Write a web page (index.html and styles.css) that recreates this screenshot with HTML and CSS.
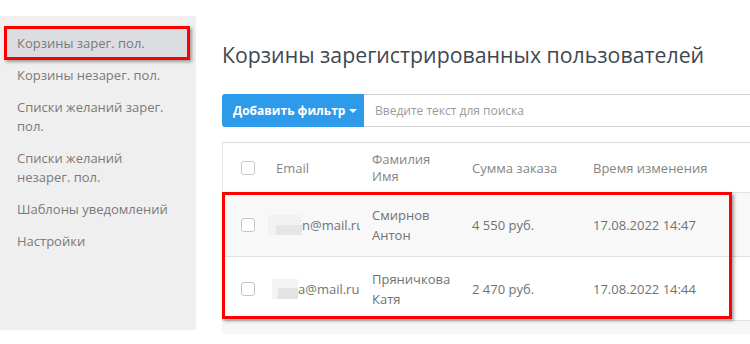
FILE: index.html
```html
<!DOCTYPE html>
<html lang="ru">
<head>
<meta charset="utf-8">
<link rel="stylesheet" href="styles.css">
</head>
<body>
<div class="page">
  <aside class="sidebar">
    <div class="nav-item active">Корзины зарег. пол.</div>
    <div class="nav-item">Корзины незарег. пол.</div>
    <div class="nav-item">Списки желаний зарег. пол.</div>
    <div class="nav-item">Списки желаний незарег. пол.</div>
    <div class="nav-item">Шаблоны уведомлений</div>
    <div class="nav-item">Настройки</div>
  </aside>
  <main class="main">
    <h1 class="title">Корзины зарегистрированных пользователей</h1>
    <div class="filter-bar">
      <button class="filter-btn">Добавить фильтр <span class="caret"></span></button>
      <div class="search">Введите текст для поиска</div>
    </div>
    <div class="panel">
      <div class="row head">
        <div class="cell c-check"><span class="checkbox"></span></div>
        <div class="cell c-email">Email</div>
        <div class="cell c-name">Фамилия Имя</div>
        <div class="cell c-sum">Сумма заказа</div>
        <div class="cell c-time">Время изменения</div>
      </div>
      <div class="body">
        <div class="row odd">
          <div class="cell c-check"><span class="checkbox"></span></div>
          <div class="cell c-email"><span class="blur b1"></span>n@mail.ru</div>
          <div class="cell c-name">Смирнов Антон</div>
          <div class="cell c-sum">4 550 руб.</div>
          <div class="cell c-time">17.08.2022 14:47</div>
        </div>
        <div class="row">
          <div class="cell c-check"><span class="checkbox"></span></div>
          <div class="cell c-email"><span class="blur b2"></span>a@mail.ru</div>
          <div class="cell c-name">Пряничкова Катя</div>
          <div class="cell c-sum">2 470 руб.</div>
          <div class="cell c-time">17.08.2022 14:44</div>
        </div>
        <div class="highlight"></div>
      </div>
      <div class="panel-foot"></div>
    </div>
  </main>
</div>
</body>
</html>
```
FILE: styles.css
```css
* { box-sizing: border-box; }
html, body { margin: 0; padding: 0; background: #fff; }
body { font-family: "Open Sans", "Liberation Sans", sans-serif; }
.page {
  display: flex;
  padding-top: 16px;
  width: 750px;
  height: 344px;
  overflow: hidden;
}
.sidebar {
  width: 196px;
  height: 314px;
  flex: none;
  background: #efefef;
  padding-top: 10px;
}
.nav-item {
  font-size: 13px;
  line-height: 19px;
  color: #7a7a7a;
  padding: 6px 20px 7px 17px;
}
.nav-item.active {
  margin-left: 4px;
  width: 186px;
  padding: 5px 10px 6px 10px;
  height: 34px;
  line-height: 18px;
  background: #dcdde0;
  border: 3px solid #f00;
  box-shadow: 2px 2px 3px rgba(0,0,0,0.35);
  margin-bottom: 0;
}
.main {
  flex: 1;
  padding-left: 26px;
  min-width: 0;
}
.title {
  margin: 24px 0 0 0;
  font-size: 21.3px;
  font-weight: 400;
  line-height: 29px;
  color: #3f474f;
  white-space: nowrap;
}
.filter-bar {
  display: flex;
  margin-top: 25px;
  height: 33px;
}
.filter-btn {
  flex: none;
  width: 142px;
  height: 33px;
  border: 0;
  border-radius: 3px 0 0 3px;
  background: #2e9bea;
  color: #fff;
  font-family: inherit;
  font-size: 12px;
  font-weight: 700;
  text-align: left;
  padding: 0 0 0 11px;
  display: flex;
  align-items: center;
  gap: 4px;
}
.caret {
  width: 0; height: 0;
  border-left: 4px solid transparent;
  border-right: 4px solid transparent;
  border-top: 4px solid #fff;
}
.search {
  flex: 1;
  border-top: 1px solid #cfcfcf;
  border-bottom: 1px solid #d4d4d4;
  font-size: 12px;
  color: #9a9a9a;
  padding-left: 11px;
  display: flex;
  align-items: center;
}
.panel {
  margin-top: 15px;
  border-top: 1px solid #dcdcdc;
  border-left: 1px solid #e2e2e2;
  width: 560px;
}
.row {
  display: grid;
  grid-template-columns: 41px 96px 100px 121px 1fr;
  border-bottom: 1px solid #e2e2e2;
  font-size: 13px;
  color: #727272;
  line-height: 20px;
}
.row.odd { background: #f8f8f8; }
.row.head { color: #858585; line-height: 17px; }
.cell {
  padding: 12px 0 11px 12px;
  display: flex;
  align-items: center;
  white-space: nowrap;
  overflow: hidden;
}
.head .cell { padding-top: 8px; padding-bottom: 7px; }
.c-check { padding-left: 18px; }
.c-name { white-space: normal; padding-right: 13px; }
.checkbox {
  width: 14px;
  height: 14px;
  border: 1px solid #c6c6c6;
  border-radius: 3px;
  background: #fff;
  flex: none;
}
.blur {
  flex: none;
  height: 20px;
  width: 34px;
  margin-left: -8px;
  background:
    linear-gradient(#e6e6e6, #e6e6e6) 8px 10px / 26px 10px no-repeat,
    #f2f2f2;
}
.b2 { margin-left: -4px; width: 26px; background:
    linear-gradient(#e3e3e3, #e3e3e3) 6px 9px / 20px 11px no-repeat,
    #f3f3f3; }
.body { position: relative; }
.highlight {
  position: absolute;
  left: -1px;
  top: -1px;
  width: 510px;
  height: 127px;
  border: 3px solid #f00;
  box-shadow: 2px 2px 3px rgba(0,0,0,0.35);
  pointer-events: none;
}
.panel-foot {
  height: 13px;
  background: #f6f6f6;
  margin-left: -1px;
}
```
